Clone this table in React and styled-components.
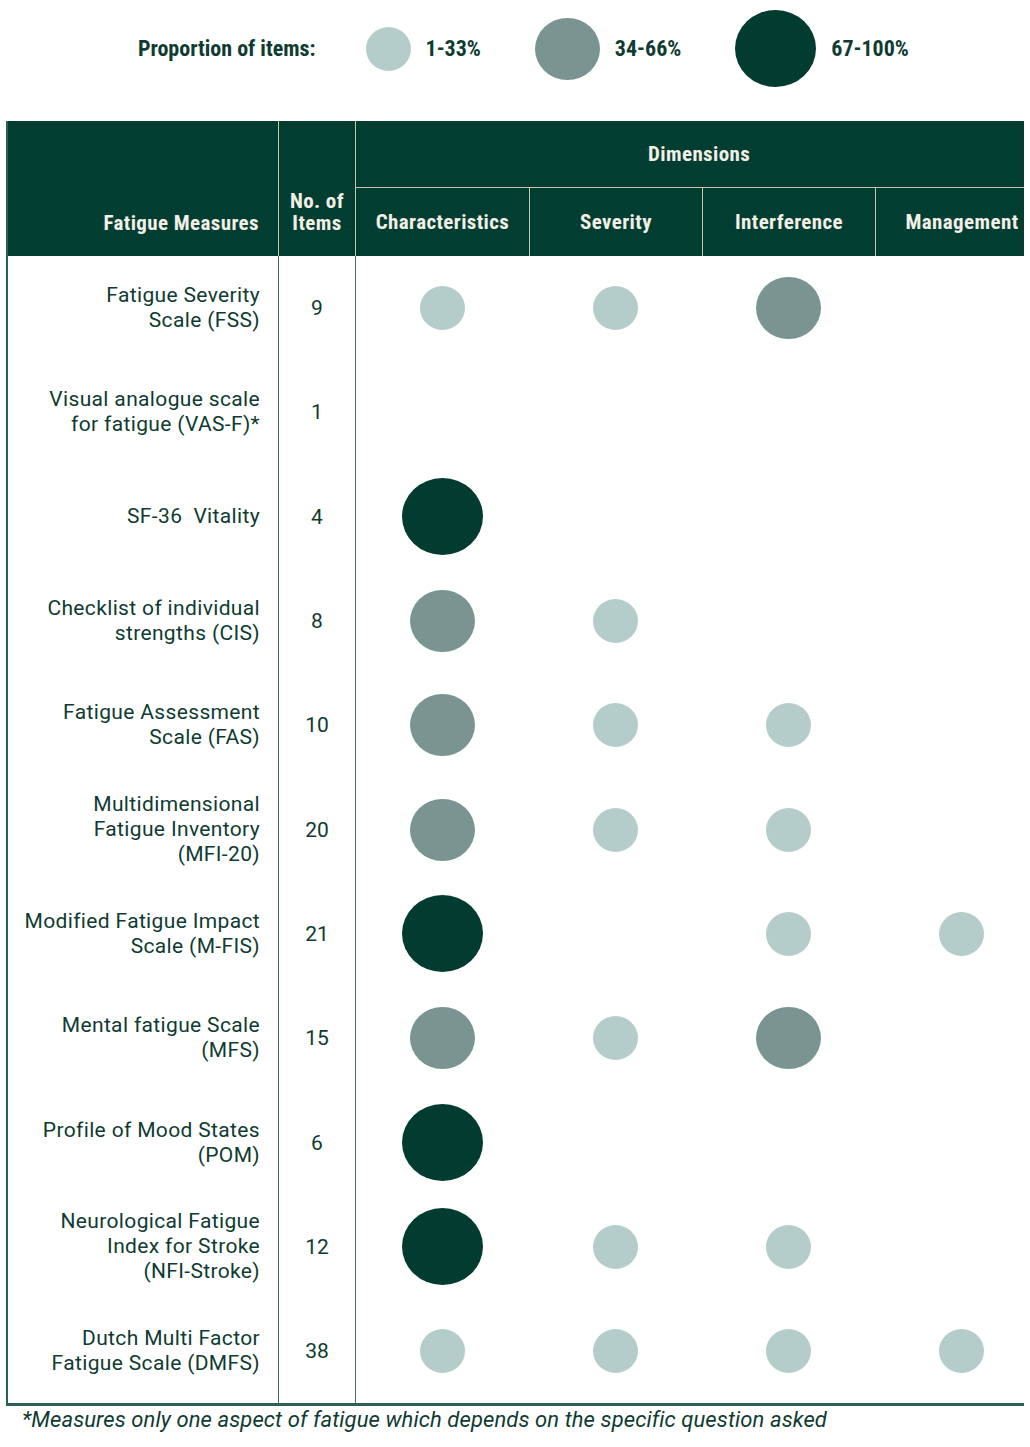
import React from 'react'
import styled, { createGlobalStyle } from 'styled-components';

const GlobalStyle = createGlobalStyle`
  html, body {
    margin: 0;
    padding: 0;
    background: #ffffff;
  }
  body {
    font-family: Roboto, "Liberation Sans", sans-serif;
    color: #0f3b32;
  }
`

const SIZES = {
  low: { w: 45, h: 44, color: '#b5cdca' },
  mid: { w: 65, h: 62, color: '#7a9491' },
  high: { w: 81, h: 77, color: '#023c30' },
}

const rows = [
  { name: ['Fatigue Severity', 'Scale (FSS)'], items: 9, dims: ['low', 'low', 'mid', null] },
  { name: ['Visual analogue scale', 'for fatigue (VAS-F)*'], items: 1, dims: [null, null, null, null] },
  { name: ['SF-36  Vitality'], items: 4, dims: ['high', null, null, null] },
  { name: ['Checklist of individual', 'strengths (CIS)'], items: 8, dims: ['mid', 'low', null, null] },
  { name: ['Fatigue Assessment', 'Scale (FAS)'], items: 10, dims: ['mid', 'low', 'low', null] },
  { name: ['Multidimensional', 'Fatigue Inventory', '(MFI-20)'], items: 20, dims: ['mid', 'low', 'low', null] },
  { name: ['Modified Fatigue Impact', 'Scale (M-FIS)'], items: 21, dims: ['high', null, 'low', 'low'] },
  { name: ['Mental fatigue Scale', '(MFS)'], items: 15, dims: ['mid', 'low', 'mid', null] },
  { name: ['Profile of Mood States', '(POM)'], items: 6, dims: ['high', null, null, null] },
  { name: ['Neurological Fatigue', 'Index for Stroke', '(NFI-Stroke)'], items: 12, dims: ['high', 'low', 'low', null] },
  { name: ['Dutch Multi Factor', 'Fatigue Scale (DMFS)'], items: 38, dims: ['low', 'low', 'low', 'low'] },
]

const dimensions = ['Characteristics', 'Severity', 'Interference', 'Management']

function App() {
  return (
    <Page>
      <GlobalStyle />
      <Legend>
        <LegendTitle>Proportion of items:</LegendTitle>
        <LegendItem>
          <Dot $size="low" />
          <LegendLabel>1-33%</LegendLabel>
        </LegendItem>
        <LegendItem>
          <Dot $size="mid" />
          <LegendLabel>34-66%</LegendLabel>
        </LegendItem>
        <LegendItem>
          <Dot $size="high" />
          <LegendLabel>67-100%</LegendLabel>
        </LegendItem>
      </Legend>

      <TableFrame>
        <Table>
          <HeadCell $col="1" $row="1 / span 2" $align="right">Fatigue Measures</HeadCell>
          <HeadCell $col="2" $row="1 / span 2" $align="center" $divider>
            No. of<br />Items
          </HeadCell>
          <GroupCell>Dimensions</GroupCell>
          {dimensions.map((d, i) => (
            <SubHeadCell key={d} $first={i === 0}>{d}</SubHeadCell>
          ))}

          {rows.map((r) => (
            <React.Fragment key={r.name.join(' ')}>
              <NameCell>
                {r.name.map((line) => (
                  <span key={line}>{line}</span>
                ))}
              </NameCell>
              <CountCell>{r.items}</CountCell>
              {r.dims.map((d, i) => (
                <DotCell key={i}>
                  {d && <Dot $size={d} />}
                </DotCell>
              ))}
            </React.Fragment>
          ))}
        </Table>
      </TableFrame>

      <Footnote>*Measures only one aspect of fatigue which depends on the specific question asked</Footnote>
    </Page>
  )
}

const Page = styled.div`
  width: 1030px;
  height: 1447px;
  overflow: hidden;
  background: #ffffff;
`

const condensed = `
  font-family: "Roboto Condensed", "DejaVu Sans Condensed", "Liberation Sans Narrow", Roboto, sans-serif;
  font-stretch: condensed;
  font-weight: 700;
`

const Legend = styled.div`
  display: flex;
  align-items: center;
  height: 97px;
  padding-left: 138px;
`

const LegendTitle = styled.div`
  ${condensed}
  font-size: 22px;
  color: #0f3b32;
  white-space: nowrap;
  margin-right: 50px;
`

const LegendItem = styled.div`
  display: flex;
  align-items: center;
  gap: 15px;
  margin-right: 54px;
`

const LegendLabel = styled.div`
  ${condensed}
  font-size: 22px;
  color: #0f3b32;
  white-space: nowrap;
`

const Dot = styled.div`
  flex: none;
  width: ${(p) => SIZES[p.$size].w}px;
  height: ${(p) => SIZES[p.$size].h}px;
  border-radius: 50%;
  background: ${(p) => SIZES[p.$size].color};
`

const TableFrame = styled.div`
  margin: 24px 0 0 6px;
  width: 1018px;
  overflow: hidden;
`

const Table = styled.div`
  display: grid;
  width: 1042px;
  grid-template-columns: 270px 78px repeat(4, 173px);
  grid-template-rows: 67px 68px repeat(11, 104.3px);
  border-left: 2px solid #2c5f58;
  border-bottom: 3px solid #2c5f58;
  box-sizing: border-box;
`

const headText = `
  background: #023d31;
  color: #f2efe6;
  font-size: 21px;
  letter-spacing: 0.4px;
`

const HeadCell = styled.div`
  ${condensed}
  ${headText}
  grid-column: ${(p) => p.$col};
  grid-row: ${(p) => p.$row};
  line-height: 22px;
  display: flex;
  align-items: flex-end;
  justify-content: ${(p) => (p.$align === 'right' ? 'flex-end' : 'center')};
  text-align: ${(p) => p.$align};
  padding: 0 0 22px 0;
  padding-right: ${(p) => (p.$align === 'right' ? '19px' : '0')};
  border-left: ${(p) => (p.$divider ? '1px solid #c9c2ad' : 'none')};
  border-right: ${(p) => (p.$divider ? '1px solid #c9c2ad' : 'none')};
`

const GroupCell = styled.div`
  ${condensed}
  ${headText}
  grid-column: 3 / span 4;
  grid-row: 1;
  display: flex;
  align-items: center;
  padding-left: 292px;
  border-bottom: 1px solid #c9c2ad;
`

const SubHeadCell = styled.div`
  ${condensed}
  ${headText}
  grid-row: 2;
  display: flex;
  align-items: center;
  justify-content: center;
  border-left: ${(p) => (p.$first ? 'none' : '1px solid #c9c2ad')};
`

const NameCell = styled.div`
  display: flex;
  flex-direction: column;
  justify-content: center;
  align-items: flex-end;
  text-align: right;
  padding-right: 18px;
  font-size: 21px;
  line-height: 25px;
  letter-spacing: 0.35px;
  color: #0f3b32;
  white-space: pre;
`

const CountCell = styled.div`
  display: flex;
  align-items: center;
  justify-content: center;
  font-size: 21px;
  color: #0f3b32;
  border-left: 1px solid #3d6f69;
  border-right: 1px solid #3d6f69;
`

const DotCell = styled.div`
  display: flex;
  align-items: center;
  justify-content: center;
`

const Footnote = styled.div`
  font-style: italic;
  font-size: 22px;
  letter-spacing: 0.1px;
  color: #0f3b32;
  padding: 1px 0 0 22px;
  white-space: nowrap;
`

export default App
